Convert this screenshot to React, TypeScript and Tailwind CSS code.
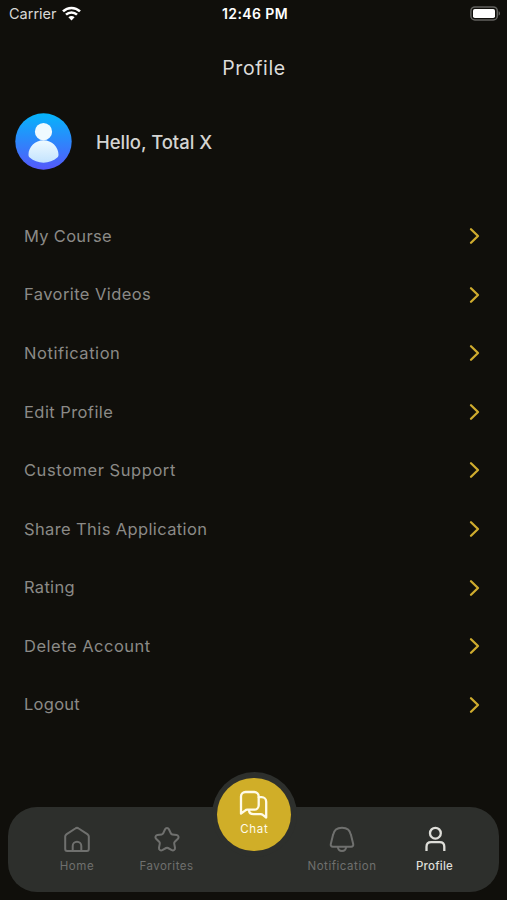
import type { ReactNode } from 'react'

const menuItems = [
  { label: 'My Course', tracking: 'tracking-[0.3px]' },
  { label: 'Favorite Videos', tracking: 'tracking-[0.42px]' },
  { label: 'Notification', tracking: 'tracking-[0.56px]' },
  { label: 'Edit Profile', tracking: 'tracking-[0.43px]' },
  { label: 'Customer Support', tracking: 'tracking-[0.56px]' },
  { label: 'Share This Application', tracking: 'tracking-[0.38px]' },
  { label: 'Rating', tracking: 'tracking-[0.3px]' },
  { label: 'Delete Account', tracking: 'tracking-[0.5px]' },
  { label: 'Logout', tracking: 'tracking-[0.27px]' },
]

function StatusBar() {
  return (
    <header className="grid h-7 grid-cols-3 items-center pl-[9px] pr-[6px] text-white">
      <div className="flex items-center gap-[5px]">
        <span className="text-[14.5px] leading-none text-[#d8d8d6]">Carrier</span>
        <svg className="-mt-0.5" width="19" height="15" viewBox="0 0 19 15" fill="none" stroke="#fff" strokeWidth="2.6">
          <path d="M1 5.4C5.8 .8 13.2 .8 18 5.4" />
          <path d="M4 8.6C7.1 5.7 11.9 5.7 15 8.6" />
          <path d="M9.5 14.4 6.4 11.3C8.2 9.7 10.8 9.7 12.6 11.3Z" fill="#fff" stroke="none" />
        </svg>
      </div>
      <span className="text-center text-[14px] font-semibold leading-none tracking-[0.4px]">12:46 PM</span>
      <svg className="-mt-0.5 justify-self-end" width="31" height="15" viewBox="0 0 31 15">
        <rect x=".9" y=".9" width="26.4" height="13" rx="4" fill="none" stroke="#62625f" strokeWidth="1.5" />
        <rect x="3" y="3" width="22" height="9" rx="1.8" fill="#fff" />
        <path d="M28.6 5.2c1.9.7 1.9 3.7 0 4.4Z" fill="#62625f" />
      </svg>
    </header>
  )
}

function Avatar() {
  return (
    <svg width="57" height="57" viewBox="0 0 57 57">
      <defs>
        <linearGradient id="avatar-bg" x1="0" y1="0" x2="0" y2="1">
          <stop offset="0" stopColor="#05b5fb" />
          <stop offset="1" stopColor="#5558fb" />
        </linearGradient>
        <linearGradient id="avatar-fg" x1="0" y1="0" x2="0" y2="1">
          <stop offset="0" stopColor="#effaff" />
          <stop offset="1" stopColor="#c3e3fe" />
        </linearGradient>
      </defs>
      <circle cx="28.5" cy="28.5" r="28.2" fill="url(#avatar-bg)" />
      <path
        d="M28.5 27.3c8.3 0 15 6.9 15 14.2 0 1.5-.3 2.2-1.2 3-3.6 3.2-8.8 5.200-13.800 5.200s-10.200-2-13.800-5.200c-.9-.8-1.200-1.500-1.200-3 0-7.300 6.700-14.200 15-14.200Z"
        fill="url(#avatar-fg)"
      />
      <circle cx="28.5" cy="18.7" r="8.6" fill="#effaff" />
    </svg>
  )
}

function NavItem({ label, className, children }: { label: string; className: string; children: ReactNode }) {
  return (
    <button className={`flex flex-col items-center gap-[7px] ${className}`}>
      <svg
        width="28"
        height="28"
        viewBox="0 0 28 28"
        fill="none"
        stroke="currentColor"
        strokeWidth="2"
        strokeLinecap="round"
        strokeLinejoin="round"
      >
        {children}
      </svg>
      <span className="whitespace-nowrap text-[11.5px] leading-none">{label}</span>
    </button>
  )
}

export default function App() {
  return (
    <div className="flex h-[900px] w-[507px] flex-col overflow-hidden bg-[#100f0b] font-['Inter',sans-serif]">
      <StatusBar />
      <h1 className="mt-[27px] pl-px text-center text-[19.5px] leading-[26px] tracking-[0.6px] text-[#dcdcda]">
        Profile
      </h1>

      <section className="mt-8 flex items-center gap-6 pl-[15px]">
        <Avatar />
        <p className="pt-px text-[18.5px] font-medium leading-none tracking-[-0.05px] text-[#d4d4d2]">Hello, Total X</p>
      </section>

      <ul className="mt-[36.7px] pl-6 pr-[25.5px]">
        {menuItems.map((item) => (
          <li key={item.label} className="flex h-[58.6px] items-center justify-between">
            <span className={`text-[16.5px] leading-none text-[#8b8a87] ${item.tracking}`}>{item.label}</span>
            <svg width="14" height="18" viewBox="0 0 14 18" fill="none" stroke="#cfac2e" strokeWidth="2.3">
              <path d="M3 2.2 10 9 3 15.8" strokeLinecap="round" strokeLinejoin="round" />
            </svg>
          </li>
        ))}
      </ul>

      <nav className="relative mx-2 mb-2 mt-auto flex h-[85px] rounded-[29px] bg-[#2d2f2c] pt-[18px] text-[#6f706e]">
        <NavItem label="Home" className="ml-[30px] w-[78px] pt-px tracking-[0.6px]">
          <path d="M2.2 10.600c0-.9.4-1.600 1.100-2.200l9-5.900c1.100-.8 2.300-.8 3.400 0l9 5.900c.7.600 1.100 1.300 1.100 2.200V23c0 1.100-.8 1.900-1.900 1.900H4.100c-1.100 0-1.900-.8-1.900-1.900Z" />
          <path d="M9.700 24.900V20a4.300 4.300 0 0 1 8.600 0v4.900" />
        </NavItem>
        <NavItem label="Favorites" className="ml-[11.5px] w-[78px] pt-px tracking-[0.5px]">
          <path d="M12.100 3.300c.8-1.700 3-1.700 3.800 0l1.900 4c.3.600.8 1 1.500 1.100l4.300.6c1.900.3 2.600 2.500 1.300 3.800l-3.100 3c-.5.500-.7 1.100-.6 1.800l.8 4.200c.3 1.800-1.600 3.200-3.200 2.300l-3.800-2.100c-.6-.3-1.300-.3-1.900 0l-3.800 2.100c-1.700.9-3.600-.5-3.300-2.300l.8-4.200c.1-.7-.1-1.300-.6-1.800l-3.100-3C1.800 11.500 2.500 9.300 4.400 9l4.300-.6c.7-.1 1.200-.5 1.500-1.100Z" />
        </NavItem>
        <NavItem label="Notification" className="ml-[97.5px] w-[78px] pt-px tracking-[0.55px]">
          <path d="M14 1.800c5 0 8.200 3 9 7.300l2.200 8.900c.4 1.500-.5 2.700-2 2.700H4.800c-1.500 0-2.400-1.200-2-2.700L5 9.100c.8-4.300 4-7.300 9-7.300Z" />
          <path d="M9.800 20.900c.3 2.400 2 4.100 4.200 4.100s3.900-1.700 4.200-4.100" />
        </NavItem>
        <NavItem label="Profile" className="ml-[14.5px] w-[78px] pt-px font-medium tracking-[0.25px] text-[#deded9]">
          <circle cx="14.4" cy="7.2" r="5.4" strokeWidth="2.3" />
          <path d="M5.5 25v-4.300c0-2.900 1.800-4.600 4.600-4.600h8.600c2.800 0 4.600 1.700 4.600 4.600V25" strokeWidth="2.3" strokeLinecap="butt" />
        </NavItem>

        {/* Floating chat button, sits over the top edge of the bar */}
        <div className="absolute left-[203.5px] top-[-35px] size-[85px] rounded-full bg-[#2d2f2c] p-[5.5px]">
          <button className="flex size-[73.5px] flex-col items-center rounded-full bg-[#d0ae28] pt-[12px] text-[#fffbe8]">
            <svg
              width="30"
              height="30"
              viewBox="0 0 30 30"
              fill="none"
              stroke="currentColor"
              strokeWidth="2.3"
              strokeLinecap="round"
              strokeLinejoin="round"
            >
              <path d="M2 23.5V6.500C2 4 4 2 6.500 2h8.700c2.500 0 4.500 2 4.500 4.500v8.700c0 2.500-2 4.500-4.500 4.500H8.300c-.9 0-1.600.3-2.200.9Z" />
              <path d="M19.700 7.200h3c2.500 0 4.500 2 4.500 4.500v15.800l-3.400-2.600c-.6-.5-1.200-.7-2-.7h-7.300c-2.500 0-4.300-1.400-4.500-3.800" />
            </svg>
            <span className="mt-1 pl-px text-[11.5px] leading-none tracking-[0.7px]">Chat</span>
          </button>
        </div>
      </nav>
    </div>
  )
}
